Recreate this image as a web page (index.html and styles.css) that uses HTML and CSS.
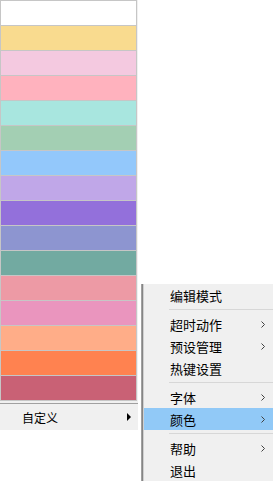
FILE: index.html
```html
<!DOCTYPE html>
<html lang="zh-CN">
<head>
    <meta charset="UTF-8">
    <meta name="viewport" content="width=device-width, initial-scale=1.0">
    <title>颜色</title>
    <link rel="stylesheet" href="styles.css">
</head>
<body>
    <div class="color-menu">
        <div class="swatches">
            <div class="swatch" style="background:#ffffff"></div>
            <div class="swatch" style="background:#f9db8f"></div>
            <div class="swatch" style="background:#f4c9e0"></div>
            <div class="swatch" style="background:#ffb2be"></div>
            <div class="swatch" style="background:#a8e6df"></div>
            <div class="swatch" style="background:#a3cfb3"></div>
            <div class="swatch" style="background:#93c8fb"></div>
            <div class="swatch" style="background:#c0a7e8"></div>
            <div class="swatch" style="background:#9370db"></div>
            <div class="swatch" style="background:#8d95d0"></div>
            <div class="swatch" style="background:#72aaa1"></div>
            <div class="swatch" style="background:#ed9aa5"></div>
            <div class="swatch" style="background:#ea95be"></div>
            <div class="swatch" style="background:#ffad88"></div>
            <div class="swatch" style="background:#ff8250"></div>
            <div class="swatch" style="background:#c96175"></div>
        </div>
        <div class="menu-sep"></div>
        <div class="custom-item">
            <span>自定义</span>
            <span class="tri"></span>
        </div>
    </div>

    <div class="context-menu">
        <div class="item">编辑模式</div>
        <div class="sep"></div>
        <div class="item">超时动作<svg class="chev" viewBox="0 0 4 7"><path d="M0.5 0.5 L3.5 3.5 L0.5 6.5"/></svg></div>
        <div class="item">预设管理<svg class="chev" viewBox="0 0 4 7"><path d="M0.5 0.5 L3.5 3.5 L0.5 6.5"/></svg></div>
        <div class="item">热键设置</div>
        <div class="sep"></div>
        <div class="item">字体<svg class="chev" viewBox="0 0 4 7"><path d="M0.5 0.5 L3.5 3.5 L0.5 6.5"/></svg></div>
        <div class="item active">颜色<svg class="chev" viewBox="0 0 4 7"><path d="M0.5 0.5 L3.5 3.5 L0.5 6.5"/></svg></div>
        <div class="sep"></div>
        <div class="item">帮助<svg class="chev" viewBox="0 0 4 7"><path d="M0.5 0.5 L3.5 3.5 L0.5 6.5"/></svg></div>
        <div class="item">退出</div>
    </div>
</body>
</html>
```

FILE: styles.css
```css
body {
    margin: 0;
    background-color: #fff;
    font-family: "Noto Sans CJK SC", "Noto Sans", sans-serif;
    font-size: 12px;
    color: #000;
    height: 481px;
    overflow: hidden;
    position: relative;
}
.color-menu {
    width: 138px;
    background-color: #f0f0f0;
}
.swatches {
    width: 135px;
    padding: 1px;
    background-color: #c6c6c6;
    display: flex;
    flex-direction: column;
    gap: 1px;
}
.swatch {
    height: 24px;
}
.menu-sep {
    margin-top: 2px;
    height: 1px;
    background-color: #a0a0a0;
}
.custom-item {
    height: 26px;
    display: flex;
    align-items: center;
    justify-content: space-between;
    padding: 0 7px 0 22px;
}
.tri {
    width: 0;
    height: 0;
    border-top: 4px solid transparent;
    border-bottom: 4px solid transparent;
    border-left: 4px solid #000;
}
.context-menu {
    position: absolute;
    left: 141px;
    top: 284px;
    right: 0;
    bottom: 0;
    background-color: #f0f0f0;
    border-left: 1px solid #a0a0a0;
    box-shadow: inset 1px 0 #858585, inset 2px 0 #d0d0d0;
    padding-left: 2px;
    font-size: 13px;
}
.item {
    height: 22px;
    display: flex;
    align-items: center;
    justify-content: space-between;
    padding: 0 8px 0 26px;
}
.item.active {
    background-color: #91c9f7;
}
.chev {
    width: 4px;
    height: 7px;
    fill: none;
    stroke: #404040;
    stroke-width: 1;
}
.sep {
    height: 1px;
    margin: 3px 0 3px 25px;
    background-color: #d7d7d7;
}
```
